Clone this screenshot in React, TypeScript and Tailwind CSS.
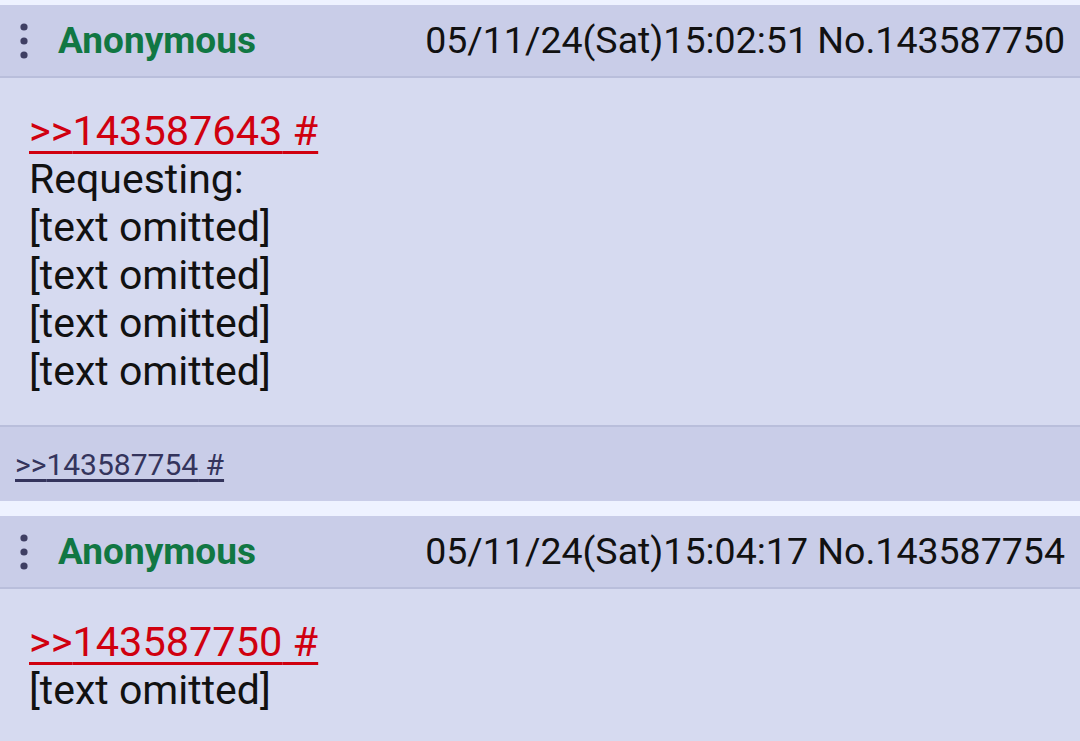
import React from 'react';

type Post = {
  no: string;
  date: string;
  quote: string;
  lines: string[];
  replies?: string[];
};

const posts: Post[] = [
  {
    no: '143587750',
    date: '05/11/24(Sat)15:02:51',
    quote: '143587643',
    lines: ['Requesting:', '[text omitted]', '[text omitted]', '[text omitted]', '[text omitted]'],
    replies: ['143587754'],
  },
  {
    no: '143587754',
    date: '05/11/24(Sat)15:04:17',
    quote: '143587750',
    lines: ['[text omitted]'],
  },
];

function MoreDots() {
  return (
    <svg width="12" height="36" viewBox="0 0 12 36" className="shrink-0">
      <circle cx="6" cy="4" r="3.6" fill="#3f3f63" />
      <circle cx="6" cy="18" r="3.6" fill="#3f3f63" />
      <circle cx="6" cy="32" r="3.6" fill="#3f3f63" />
    </svg>
  );
}

function PostCard({ post }: { post: Post }) {
  return (
    <div className="flex flex-col">
      {/* Header */}
      <div className="flex h-[73px] items-center border-b-2 border-[#b9bedb] bg-[#c9cde8] pl-[18px] pr-[15px]">
        <MoreDots />
        <span className="ml-[28px] text-[37px] font-bold text-[#117743]">Anonymous</span>
        <span className="ml-auto text-[37.5px] text-[#111]">
          {post.date} No.{post.no}
        </span>
      </div>

      {/* Body */}
      <div className="bg-[#d6daf0] px-[29px] pb-[30px] pt-[29px] text-[41px] leading-[48px] text-[#111]">
        <div>
          <a className="text-[41.5px] text-[#d0000f] underline decoration-[3px] underline-offset-[6px]">
            &gt;&gt;{post.quote} #
          </a>
        </div>
        {post.lines.map((l, i) => (
          <div key={i}>{l}</div>
        ))}
      </div>

      {/* Replies */}
      {post.replies && (
        <div className="flex h-[76px] items-center border-t-2 border-[#b9bedb] bg-[#c9cde8] px-[15px]">
          {post.replies.map((r) => (
            <a key={r} className="text-[30px] text-[#34345c] underline underline-offset-[4px]">
              &gt;&gt;{r} #
            </a>
          ))}
        </div>
      )}
    </div>
  );
}

export default function App() {
  return (
    <div
      className="h-[741px] w-[1080px] overflow-hidden bg-[#eef2ff] pt-[5px]"
      style={{ fontFamily: 'Roboto, "Noto Sans", sans-serif' }}
    >
      <div className="flex flex-col gap-[15px]">
        {posts.map((p) => (
          <PostCard key={p.no} post={p} />
        ))}
      </div>
    </div>
  );
}
